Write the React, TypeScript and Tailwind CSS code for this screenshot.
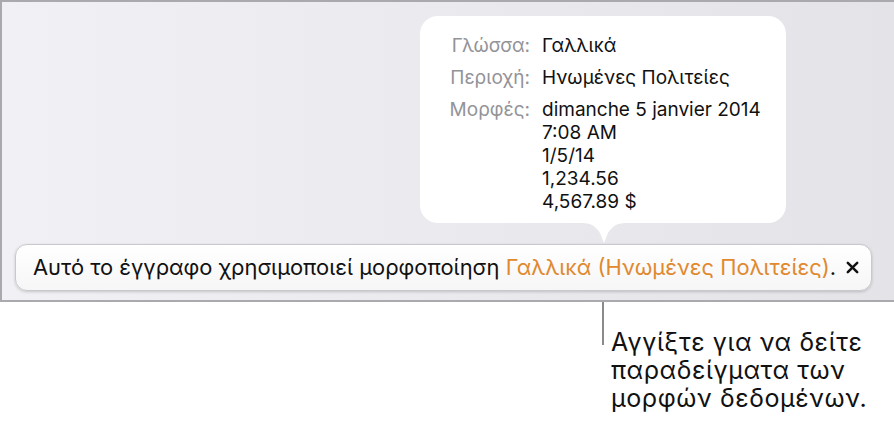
const font = { fontFamily: "Inter, 'Noto Sans', sans-serif" };

const formats = ["dimanche 5 janvier 2014", "7:08 AM", "1/5/14", "1,234.56", "4,567.89 $"];

function InfoPopover() {
  return (
    <div className="absolute left-[418px] top-[14px] w-[366px]">
      <div className="rounded-[18px] bg-white pl-[24px] pr-4 pt-[18px] pb-[10px] text-[19px] leading-[23px]">
        <div className="grid grid-cols-[86px_auto] gap-x-[12px] gap-y-[9px]">
          <div className="text-right text-[#939398]">Γλώσσα:</div>
          <div className="text-[#111]">Γαλλικά</div>
          <div className="text-right text-[#939398]">Περιοχή:</div>
          <div className="text-[#111]">Ηνωμένες Πολιτείες</div>
          <div className="text-right text-[#939398]">Μορφές:</div>
          <div className="text-[#111]">
            {formats.map((f) => (
              <div key={f}>{f}</div>
            ))}
          </div>
        </div>
      </div>
      <svg className="ml-[162px] block" width="44" height="21" viewBox="0 0 44 21">
        <path d="M0 0 C10 0 14 4 18 10 L22 20 L26 10 C30 4 34 0 44 0 Z" fill="#fff" />
      </svg>
    </div>
  );
}

function FormatBanner() {
  return (
    <div className="ml-[13px] flex h-[47px] w-[857px] items-center gap-[10px] rounded-[12px] border border-[#c9c9cd] bg-gradient-to-b from-white to-[#f6f6f7] pl-[17px] pr-[12px] text-[21.9px] text-[#111] shadow-[0_1px_3px_rgba(0,0,0,0.18)]">
      <span className="whitespace-nowrap">
        Αυτό το έγγραφο χρησιμοποιεί μορφοποίηση{" "}
        <span className="text-[#e0892f]">Γαλλικά (Ηνωμένες Πολιτείες)</span>.
      </span>
      <svg className="shrink-0" width="13" height="13" viewBox="0 0 13 13">
        <path d="M1.8 1.8 L11.2 11.2 M11.2 1.8 L1.8 11.2" stroke="#111" strokeWidth="2.5" strokeLinecap="round" />
      </svg>
    </div>
  );
}

export default function App() {
  return (
    <div className="h-[436px] w-[894px] overflow-hidden bg-white" style={font}>
      <div className="relative flex h-[302px] flex-col justify-end border-l-2 border-t-2 border-b-2 border-[#aaaaae] bg-gradient-to-r from-[#f1f1f5] to-[#e4e4e8] pb-[9px]">
        <FormatBanner />
        <InfoPopover />
      </div>
      <div className="flex">
        <div className="ml-[602px] h-[43px] w-[2px] bg-[#8a8a8a]" />
        <div className="ml-[7px] mt-[26px] whitespace-nowrap text-[25px] leading-[28px] tracking-[0.6px] text-[#111]">
          Αγγίξτε για να δείτε
          <br />
          παραδείγματα των
          <br />
          μορφών δεδομένων.
        </div>
      </div>
    </div>
  );
}
